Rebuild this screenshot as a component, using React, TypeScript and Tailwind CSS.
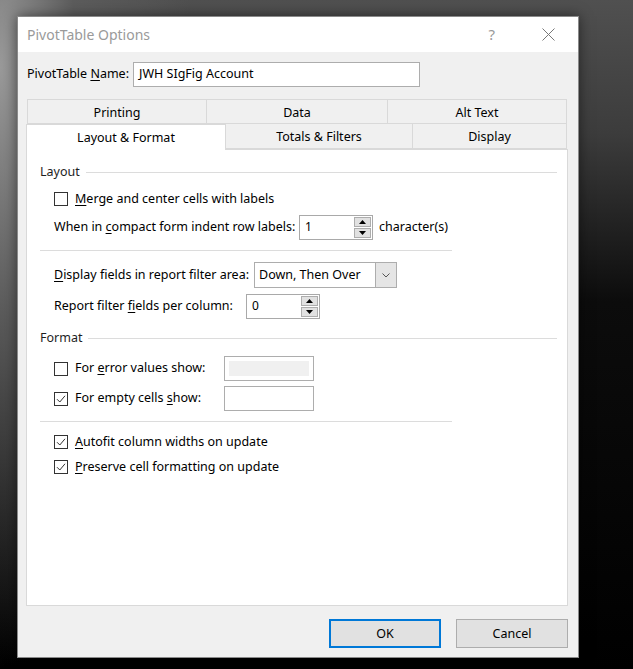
import React from 'react';

const font = { fontFamily: '"Noto Sans", "Open Sans", Arial, sans-serif' };

function Ul({ children }: { children: React.ReactNode }) {
  return <span className="underline underline-offset-2 decoration-1">{children}</span>;
}

function Checkbox({ checked }: { checked?: boolean }) {
  return (
    <div className="w-[14px] h-[14px] border border-[#333] bg-white flex items-center justify-center shrink-0">
      {checked && (
        <svg width="10" height="10" viewBox="0 0 10 10" fill="none">
          <path d="M1 5.2 L3.8 8 L9 1.8" stroke="#333" strokeWidth="1" />
        </svg>
      )}
    </div>
  );
}

function Spinner({ value }: { value: string }) {
  return (
    <div className="w-[74px] h-[25px] border border-[#a9a9a9] bg-white flex items-stretch">
      <div className="flex-1 pl-[5px] flex items-center text-[12px] text-black">{value}</div>
      <div className="w-[18px] flex flex-col gap-[1px] py-[1px] pr-[1px]">
        <div className="flex-1 bg-[#e1e1e1] border border-[#adadad] flex items-center justify-center">
          <svg width="7" height="4" viewBox="0 0 7 4"><path d="M3.5 0 L7 4 L0 4 Z" fill="#000" /></svg>
        </div>
        <div className="flex-1 bg-[#e1e1e1] border border-[#adadad] flex items-center justify-center">
          <svg width="7" height="4" viewBox="0 0 7 4"><path d="M0 0 L7 0 L3.5 4 Z" fill="#000" /></svg>
        </div>
      </div>
    </div>
  );
}

function GroupHeader({ title }: { title: string }) {
  return (
    <div className="h-[20px] flex items-center gap-[6px] pr-[10px]">
      <span className="text-[12.5px] text-[#1e1e1e]">{title}</span>
      <div className="flex-1 h-px bg-[#dcdcdc]" />
    </div>
  );
}

export default function App() {
  return (
    <div
      className="w-[633px] h-[669px] overflow-hidden pt-[16px] pl-[17px] bg-[radial-gradient(ellipse_30%_90%_at_0%_10%,#9a9a9a_0%,#5c5c5c_40%,rgba(30,30,30,0)_100%),linear-gradient(180deg,#505050_0%,#3c3c3c_20%,#0c0c0c_45%,#000_100%)]"
      style={font}
    >
      <div className="w-[562px] h-[642px] bg-[#f0f0f0] flex flex-col shadow-[0_0_12px_rgba(0,0,0,0.5)] border border-[#8a8a8a]">
        {/* title bar */}
        <div className="h-[35px] bg-white flex items-center pl-[9px] pr-[23px]">
          <span className="text-[14px] text-[#9a9a9a] flex-1">PivotTable Options</span>
          <span className="text-[15px] text-[#9a9a9a] mr-[47px]">?</span>
          <svg width="13" height="13" viewBox="0 0 13 13">
            <path d="M0.5 0.5 L12.5 12.5 M12.5 0.5 L0.5 12.5" stroke="#777" strokeWidth="1" />
          </svg>
        </div>

        {/* name row */}
        <div className="flex items-center mt-[10px] pl-[9px] h-[25px]">
          <span className="text-[12.5px] text-black w-[106px]">
            PivotTable <Ul>N</Ul>ame:
          </span>
          <div className="w-[287px] h-[25px] border border-[#adadad] bg-white flex items-center pl-[5px] text-[12.5px] text-black">
            JWH SIgFig Account
          </div>
        </div>

        {/* tabs */}
        <div className="mt-[12px] ml-[8px] w-[542px] text-[12.5px] text-black">
          <div className="flex h-[25px] ml-[1px] w-[540px]">
            <div className="w-[180px] pt-[4px] border border-[#d9d9d9] flex items-center justify-center">Printing</div>
            <div className="w-[181px] pt-[4px] border-y border-r border-[#d9d9d9] flex items-center justify-center">Data</div>
            <div className="flex-1 pt-[4px] border-y border-r border-[#d9d9d9] flex items-center justify-center">Alt Text</div>
          </div>
          <div className="flex h-[26px] items-start">
            <div className="w-[200px] h-[26px] pt-[1px] bg-white border-x border-t border-[#d9d9d9] flex items-center justify-center relative z-10">
              Layout &amp; Format
            </div>
            <div className="w-[187px] h-[25px] pt-[2px] border-b border-r border-[#d9d9d9] flex items-center justify-center">
              Totals &amp; Filters
            </div>
            <div className="w-[154px] h-[25px] pt-[2px] border-b border-r border-[#d9d9d9] flex items-center justify-center">
              Display
            </div>
          </div>

          {/* panel */}
          <div className="w-[542px] h-[457px] -mt-px bg-white border border-[#d9d9d9] pt-[12px] pl-[13px] flex flex-col">
            <GroupHeader title="Layout" />

            <div className="ml-[14px] mt-[7px] h-[20px] flex items-center gap-[7px]">
              <Checkbox />
              <span><Ul>M</Ul>erge and center cells with labels</span>
            </div>

            <div className="ml-[14px] mt-[5px] h-[26px] flex items-center">
              <span className="w-[245px]">When in <Ul>c</Ul>ompact form indent row labels:</span>
              <Spinner value="1" />
              <span className="ml-[6px]">character(s)</span>
            </div>

            <div className="mt-[10px] h-px w-[412px] bg-[#dcdcdc]" />

            <div className="ml-[14px] mt-[11px] h-[26px] flex items-center">
              <span className="w-[200px]"><Ul>D</Ul>isplay fields in report filter area:</span>
              <div className="w-[143px] h-[26px] border border-[#adadad] bg-white flex items-stretch">
                <div className="flex-1 pl-[4px] flex items-center">Down, Then Over</div>
                <div className="w-[21px] bg-[#e5e5e5] border-l border-[#adadad] flex items-center justify-center">
                  <svg width="8" height="5" viewBox="0 0 8 5" fill="none">
                    <path d="M0.5 0.5 L4 4 L7.5 0.5" stroke="#555" strokeWidth="1" />
                  </svg>
                </div>
              </div>
            </div>

            <div className="ml-[14px] mt-[6px] h-[24px] flex items-center">
              <span className="w-[192px]">Report filter <Ul>f</Ul>ields per column:</span>
              <Spinner value="0" />
            </div>

            <div className="mt-[10px]">
              <GroupHeader title="Format" />
            </div>

            <div className="ml-[14px] mt-[8px] h-[25px] flex items-center">
              <div className="w-[170px] flex items-center gap-[7px]">
                <Checkbox />
                <span>For <Ul>e</Ul>rror values show:</span>
              </div>
              <div className="w-[90px] h-[25px] border border-[#adadad] bg-white p-[4px]">
                <div className="w-full h-full bg-[#f0f0f0]" />
              </div>
            </div>

            <div className="ml-[14px] mt-[5px] h-[25px] flex items-center">
              <div className="w-[170px] flex items-center gap-[7px]">
                <Checkbox checked />
                <span>For empty cells <Ul>s</Ul>how:</span>
              </div>
              <div className="w-[90px] h-[25px] border border-[#adadad] bg-white" />
            </div>

            <div className="mt-[10px] h-px w-[412px] bg-[#dcdcdc]" />

            <div className="ml-[14px] mt-[10px] h-[20px] flex items-center gap-[7px]">
              <Checkbox checked />
              <span><Ul>A</Ul>utofit column widths on update</span>
            </div>

            <div className="ml-[14px] mt-[5px] h-[20px] flex items-center gap-[7px]">
              <Checkbox checked />
              <span><Ul>P</Ul>reserve cell formatting on update</span>
            </div>
          </div>
        </div>

        {/* buttons */}
        <div className="mt-[13px] flex justify-end gap-[15px] pr-[10px] text-[12.5px] text-black">
          <button className="w-[112px] h-[29px] pt-[2px] bg-[#e1e1e1] border-2 border-[#0078d7] flex items-center justify-center">OK</button>
          <button className="w-[112px] h-[29px] pt-[2px] bg-[#e1e1e1] border border-[#adadad] flex items-center justify-center">Cancel</button>
        </div>
      </div>
    </div>
  );
}
